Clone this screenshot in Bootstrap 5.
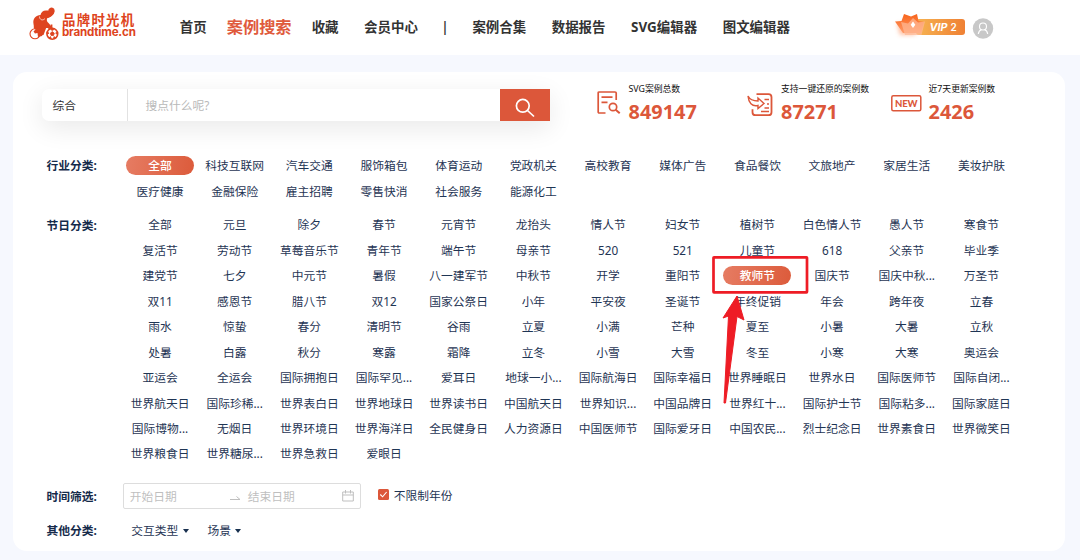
<!DOCTYPE html>
<html lang="zh-CN">
<head>
<meta charset="utf-8">
<meta name="viewport" content="width=device-width, initial-scale=1">
<title>品牌时光机 - 案例搜索</title>
<link href="https://cdn.jsdelivr.net/npm/bootstrap@5.3.0/dist/css/bootstrap.min.css" rel="stylesheet">
<style>
:root { --brand: #dc573a; --ink: #1f3554; }
body { font-family: "Noto Sans", "Noto Sans CJK SC", sans-serif; font-size: 11.75px; line-height: 18px; color: var(--ink); background: #f6f8fe; height: 560px; overflow: hidden; }
.topbar { height: 55px; padding-left: 29px; background: #fff; }
.brand { width: 138px; color: #de4420; }
.brand-mark { margin-top: -8px; }
.brand-name { margin: -3px 0 0 2px; }
.brand-cn { font: 700 13.4px/14px "Noto Sans CJK SC", sans-serif; letter-spacing: 1.3px; height: 14px; }
.brand-en { font: 700 11.6px/12px "Inter", sans-serif; letter-spacing: -.2px; }
.menu { font-size: 13.45px; font-weight: 700; color: #333; margin-top: -1px; }
.menu a { color: inherit; text-decoration: none; padding: 0 12.8px; white-space: nowrap; }
.menu a.current { color: #e05a3c; font-size: 16.2px; margin: 0 -5.5px; }
.menu .divider { padding: 0 11px 0 10.5px; font-weight: 600; color: #333; background: none; width: auto; }
.member { margin-left: 89px; margin-top: -2px; }
.panel { margin: 17px 15px 0 13px; height: 479px; border-radius: 14px; background: #fff; padding: 17px 0 0 29px; }
.search { width: 508px; height: 32px; border-radius: 7px 0 0 7px; background: #fff; box-shadow: 0 7px 26px rgba(0,0,0,.09); }
.scope { width: 86px; padding-left: 10.5px; border-right: 1px solid #e2e2e2; color: #333; }
.query { padding-left: 17.5px; color: #b9b9b9; }
.go { width: 50.5px; background: var(--brand); border: 0; border-radius: 0; }
.figure-box { height: 42px; margin-top: -7px; color: #111; }
.figure-box small { font-size: 8.8px; line-height: 14px; display: block; white-space: nowrap; }
.figure-box b { display: block; font-size: 19.9px; line-height: 24px; margin-top: 4px; color: var(--brand); }
.filter-label { width: 80.7px; padding-left: 4.5px; font-weight: 700; color: #152a4a; }
.options { display: grid; grid-template-columns: repeat(12, 74.68px); grid-auto-rows: 25.47px; justify-items: center; align-items: center; white-space: nowrap; }
.options .on { width: 68px; height: 19px; line-height: 19px; border-radius: 10px; text-align: center; color: #fff; font-weight: 500; background: linear-gradient(100deg, #e67c63, #dc5b3b); }
.range { width: 238px; height: 26px; border: 1px solid #ddd; border-radius: 2px; color: #bfbfbf; padding: 0 6px; }
.tick { width: 11px; height: 11px; border-radius: 1.5px; background: var(--brand); }
.caret { width: 0; height: 0; border: 3.3px solid transparent; border-top: 4px solid #18304f; border-bottom: 0; margin: 2px 0 0 4.5px; }
.callout { left: 711px; top: 255px; }
</style>
</head>
<body>
<header class="topbar d-flex align-items-center">
  <div class="brand d-flex align-items-start">
    <svg width="31" height="34" viewBox="0 0 31 34" class="brand-mark flex-shrink-0" fill="#de4420">
      <path d="M4.500 17C3.500 11.500 7 8 11.500 8c.5-3 3-5 6.500-4.500 2 .2 3-.5 3-1.500 2.500-1.500 4.500 0 4 3-1 4-5 5.500-7 6.500-.5 2 0 3.500 2 5l3.500 4.500-2.500 2-3.500-3-1.500 4-1.500 4-4 .5-1-3.500-4-1.500Z"/>
      <path d="M20.500 3c1.500-2.500 4.500-1.500 4 1.500s-4 5-6 5" fill="none" stroke="#de4420" stroke-width="2.200" stroke-linecap="round"/>
      <path d="M10.500 9.500c0 3.500 3.500 4.500 5.500 2" fill="none" stroke="#fff" stroke-width=".7"/>
      <circle cx="6" cy="26.800" r="5" fill="#fff" stroke="#de4420" stroke-width="1.100"/>
      <path d="M4 19.500c3 2 7 2.500 12 .5l-3 9-4 1-.5-4-2.500.5-1.500-2 2-2Z"/>
      <path d="M17 20h5.500v-2.500" fill="none" stroke="#de4420" stroke-width="1.800"/>
      <circle cx="23.300" cy="26.800" r="5.400" fill="#fff" stroke="#de4420" stroke-width="1.600"/>
      <path d="m23.300 24.600 2 1.600-.8 2.300h-2.400l-.8-2.300ZM23.300 21.700l1.600.8-1.600 1-1.600-1ZM28.300 25.200l-.2 2-1.500-1.100ZM18.300 25.200l.2 2 1.500-1.100ZM26.400 31l-2 .4.800-1.900ZM20.200 31l2 .4-.8-1.900Z" stroke="#de4420" stroke-width=".8"/>
    </svg>
    <div class="brand-name text-nowrap"><div class="brand-cn">品牌时光机</div><div class="brand-en">brandtime.cn</div></div>
  </div>
  <nav class="menu d-flex align-items-center">
    <a href="#">首页</a><a href="#" class="current">案例搜索</a><a href="#">收藏</a><a href="#">会员中心</a><span class="divider">|</span><a href="#">案例合集</a><a href="#">数据报告</a><a href="#">SVG编辑器</a><a href="#">图文编辑器</a>
  </nav>
  <div class="member d-flex align-items-center">
    <svg width="102" height="34" viewBox="892 10 102 34">
      <defs>
        <linearGradient id="gold"><stop stop-color="#f6b452"/><stop offset="1" stop-color="#ef8034"/></linearGradient>
        <linearGradient id="petal" x2="0" y2="1"><stop stop-color="#f8641b"/><stop offset="1" stop-color="#ff9a67"/></linearGradient>
        <filter id="soft" x="-40%" y="-40%" width="180%" height="180%"><feGaussianBlur stdDeviation="2"/></filter>
      </defs>
      <rect x="916" y="19" width="49" height="16" rx="3" fill="url(#gold)"/>
      <path d="M897 23h22l-4 12h-15Z" fill="#ff9765" opacity=".6" filter="url(#soft)"/>
      <path d="m895 21.500 6.500-.5 2.500-7 7 2.500 6-2.500 1.500 7 5.500 1-3 11h-18Z" fill="url(#petal)"/>
      <path d="m901 22 7 1.500 5-5.500 5 4.500 7-1-3.500 13.500H905Z" fill="#ffb994" opacity=".72"/>
      <path d="m913 21.500 2.300 3.300-2.300 3.300-2.300-3.300Z" fill="#fff"/>
      <text x="929.500" y="31" font-family="Inter, sans-serif" font-size="10" font-weight="700" font-style="italic" fill="#fff" textLength="18" lengthAdjust="spacingAndGlyphs">VIP</text>
      <text x="950.500" y="31" font-family="Inter, sans-serif" font-size="10" font-weight="600" fill="#fff">2</text>
      <circle cx="983" cy="28.500" r="10.200" fill="#c8c8c8"/>
      <g fill="none" stroke="#fff" stroke-width="1.100"><circle cx="983" cy="26.500" r="3.500"/><path d="M978.300 34c.4-2.500 1.800-4 3.200-4.400M987.700 34c-.4-2.500-1.800-4-3.200-4.400"/></g>
    </svg>
  </div>
</header>

<main class="panel">
  <section class="d-flex">
    <div class="search d-flex flex-shrink-0">
      <div class="scope d-flex align-items-center">综合</div>
      <div class="query d-flex align-items-center flex-grow-1">搜点什么呢?</div>
      <button class="go p-0 d-flex align-items-center justify-content-center" aria-label="搜索">
        <svg width="20" height="20" viewBox="0 0 20 20" style="margin-top:6px" fill="none" stroke="#fff" stroke-width="1.700"><circle cx="7.800" cy="7.800" r="6.400"/><path d="m12.500 12.500 6.500 6"/></svg>
      </button>
    </div>
    <div class="figure-box d-flex" style="margin-left:47px;width:150px">
      <svg width="24" height="24" viewBox="0 0 24 24" class="flex-shrink-0" style="margin:9px 7.500px 0 0" fill="none" stroke="#dc573a" stroke-width="1.700"><path d="M8.500 22H2.300Q1.200 22 1.200 20.900V2Q1.200 1 2.300 1H18q1.200 0 1.200 1.100V9M4.500 6.200h11M4.500 11.300h6"/><circle cx="16" cy="16" r="3.700"/><path d="m18.700 18.700 4 3.500" stroke-width="2"/></svg>
      <div><small>SVG案例总数</small><b>849147</b></div>
    </div>
    <div class="figure-box d-flex" style="width:144px">
      <svg width="26" height="24" viewBox="0 0 26 24" class="flex-shrink-0" style="margin:11px 8px 0 0" fill="none" stroke="#dc573a" stroke-width="1.400"><path d="M9.500 1.200h12q3 0 3 3v15q0 3-3 3h-13q-3 0-3-3v-3" stroke-width="1.800"/><path d="M1 3c2 4 5 5 10 5V5l6 5.500-6 5v-3C5 14 1.500 9.500 1 3ZM17.500 6.500H22M20 11h2M17.500 15H22M14 18.500h8"/></svg>
      <div><small>支持一键还原的案例数</small><b>87271</b></div>
    </div>
    <div class="figure-box d-flex">
      <svg width="31" height="17" viewBox="0 0 31 17" class="flex-shrink-0" style="margin:12.500px 6.500px 0 0"><rect x=".8" y=".8" width="29" height="15" rx="1.500" fill="none" stroke="#dc573a" stroke-width="1.500"/><text x="4" y="11.800" font-family="Lato, sans-serif" font-weight="900" font-size="9.500" textLength="22.500" fill="#dc573a">NEW</text></svg>
      <div><small>近7天更新案例数</small><b>2426</b></div>
    </div>
  </section>

  <section class="d-flex" style="margin-top:28.300px">
    <div class="filter-label" style="padding-top:4px">行业分类:</div>
    <div class="options">
      <span class="on">全部</span><span>科技互联网</span><span>汽车交通</span><span>服饰箱包</span><span>体育运动</span><span>党政机关</span><span>高校教育</span><span>媒体广告</span><span>食品餐饮</span><span>文旅地产</span><span>家居生活</span><span>美妆护肤</span>
      <span>医疗健康</span><span>金融保险</span><span>雇主招聘</span><span>零售快消</span><span>社会服务</span><span>能源化工</span>
    </div>
  </section>

  <section class="d-flex" style="margin-top:8.300px">
    <div class="filter-label" style="padding-top:4px">节日分类:</div>
    <div class="options">
      <span>全部</span><span>元旦</span><span>除夕</span><span>春节</span><span>元宵节</span><span>龙抬头</span><span>情人节</span><span>妇女节</span><span>植树节</span><span>白色情人节</span><span>愚人节</span><span>寒食节</span>
      <span>复活节</span><span>劳动节</span><span>草莓音乐节</span><span>青年节</span><span>端午节</span><span>母亲节</span><span>520</span><span>521</span><span>儿童节</span><span>618</span><span>父亲节</span><span>毕业季</span>
      <span>建党节</span><span>七夕</span><span>中元节</span><span>暑假</span><span>八一建军节</span><span>中秋节</span><span>开学</span><span>重阳节</span><span class="on">教师节</span><span>国庆节</span><span>国庆中秋...</span><span>万圣节</span>
      <span>双11</span><span>感恩节</span><span>腊八节</span><span>双12</span><span>国家公祭日</span><span>小年</span><span>平安夜</span><span>圣诞节</span><span>年终促销</span><span>年会</span><span>跨年夜</span><span>立春</span>
      <span>雨水</span><span>惊蛰</span><span>春分</span><span>清明节</span><span>谷雨</span><span>立夏</span><span>小满</span><span>芒种</span><span>夏至</span><span>小暑</span><span>大暑</span><span>立秋</span>
      <span>处暑</span><span>白露</span><span>秋分</span><span>寒露</span><span>霜降</span><span>立冬</span><span>小雪</span><span>大雪</span><span>冬至</span><span>小寒</span><span>大寒</span><span>奥运会</span>
      <span>亚运会</span><span>全运会</span><span>国际拥抱日</span><span>国际罕见...</span><span>爱耳日</span><span>地球一小...</span><span>国际航海日</span><span>国际幸福日</span><span>世界睡眠日</span><span>世界水日</span><span>国际医师节</span><span>国际自闭...</span>
      <span>世界航天日</span><span>国际珍稀...</span><span>世界表白日</span><span>世界地球日</span><span>世界读书日</span><span>中国航天日</span><span>世界知识...</span><span>中国品牌日</span><span>世界红十...</span><span>国际护士节</span><span>国际粘多...</span><span>国际家庭日</span>
      <span>国际博物...</span><span>无烟日</span><span>世界环境日</span><span>世界海洋日</span><span>全民健身日</span><span>人力资源日</span><span>中国医师节</span><span>国际爱牙日</span><span>中国农民...</span><span>烈士纪念日</span><span>世界素食日</span><span>世界微笑日</span>
      <span>世界粮食日</span><span>世界糖尿...</span><span>世界急救日</span><span>爱眼日</span>
    </div>
  </section>

  <section class="d-flex align-items-center" style="margin-top:16.400px">
    <div class="filter-label">时间筛选:</div>
    <div class="range d-flex align-items-center">
      <span style="width:99px">开始日期</span>
      <svg width="12" height="6" viewBox="0 0 12 6" fill="none" stroke="#bfbfbf" stroke-width="1" class="mt-1"><path d="M1 4.500h10L7.500 1.500"/></svg>
      <span style="margin-left:7px">结束日期</span>
      <svg width="12" height="12" viewBox="0 0 12 12" fill="none" stroke="#bfbfbf" class="ms-auto"><path d="M.7 2h10.600v9H.7ZM.7 5h10.600M3.500 0v3.500M8.500 0v3.500"/></svg>
    </div>
    <div class="d-flex align-items-center" style="margin:-2px 0 0 17px">
      <span class="tick d-flex"><svg width="11" height="11" viewBox="0 0 11 11" fill="none" stroke="#fff" stroke-width="1.100"><path d="m2.300 5.500 2.300 2.300 4-4.800"/></svg></span>
      <span style="margin-left:5px">不限制年份</span>
    </div>
  </section>
  <section class="d-flex align-items-center" style="margin-top:12px">
    <div class="filter-label">其他分类:</div>
    <span style="margin-left:8.500px">交互类型</span><i class="caret"></i>
    <span style="margin-left:18.800px">场景</span><i class="caret"></i>
  </section>
</main>

<svg class="callout position-absolute" width="98" height="151" viewBox="711 255 98 151">
  <rect x="713.500" y="257.300" width="93.500" height="35" rx=".5" fill="none" stroke="#ee1c25" stroke-width="2.700"/>
  <path d="m737 296 7 24-7-3.500-11.500 86.500-1.500 0 4.500-87-5.500 2Z" fill="#ee1c25" stroke="#ee1c25" stroke-width="1" stroke-linejoin="round"/>
</svg>
<script src="https://cdn.jsdelivr.net/npm/bootstrap@5.3.0/dist/js/bootstrap.bundle.min.js"></script>
</body>
</html>
